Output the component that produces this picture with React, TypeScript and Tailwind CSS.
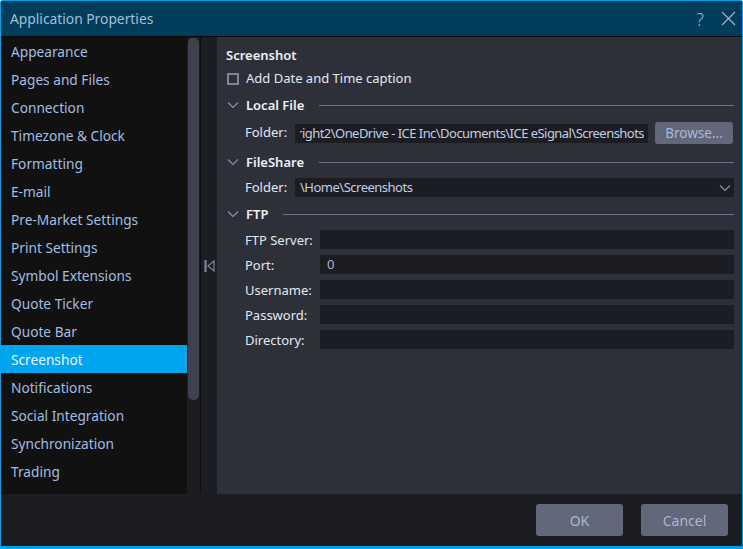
import React from "react";

const items = ["Appearance","Pages and Files","Connection","Timezone & Clock","Formatting","E-mail","Pre-Market Settings","Print Settings","Symbol Extensions","Quote Ticker","Quote Bar","Screenshot","Notifications","Social Integration","Synchronization","Trading"];

function Chevron() {
  return (
    <svg width="12" height="8" viewBox="0 0 12 8" className="shrink-0" fill="none" stroke="#8d92a6" strokeWidth="1.1">
      <path d="M1 1.5 L6 6.5 L11 1.5" />
    </svg>
  );
}

function Section({ title }: { title: string }) {
  return (
    <div className="flex items-center h-5">
      <div className="w-[20px] pl-[1px] flex items-center"><Chevron /></div>
      <span className="font-semibold text-[13px] text-[#eef0f6] pt-[2px]">{title}</span>
      <div className="flex-1 h-px bg-[#6d7080] ml-[15px]" />
    </div>
  );
}

function Field({ label, value }: { label: string; value?: string }) {
  return (
    <div className="flex items-center h-[19px] mb-[6px]">
      <span className="w-[75px] shrink-0 text-[13px] text-[#e4e8f2] pt-[2px]">{label}</span>
      <div className="flex-1 h-[19px] bg-[#1c1d22] pl-[7px] text-[13px] leading-[19px] text-[#a9b6d2]">{value}</div>
    </div>
  );
}

export default function App() {
  return (
    <div className="w-[743px] h-[549px] overflow-hidden flex flex-col border-t border-l border-r border-b-[3px] border-[#00a2ed] rounded-t-[3px] bg-[#1c1d22]" style={{ fontFamily: '"Noto Sans", sans-serif' }}>
      <div className="h-[36px] shrink-0 bg-[#003d5b] flex items-center pl-[9px] border-b border-[#0b0b0d]">
        <span className="text-[13.8px] text-[#a7bdd8] flex-1 pt-[2px]">Application Properties</span>
        <span className="text-[18px] text-[#a7b4cc] font-light mr-[17px] leading-none">?</span>
        <svg width="15" height="15" viewBox="0 0 15 15" className="mr-[6px]" stroke="#a7b4cc" strokeWidth="1.1"><path d="M1 1 L14 14 M14 1 L1 14" /></svg>
      </div>
      <div className="h-[457px] shrink-0 flex">
        <div className="w-[186px] shrink-0 bg-[#111112]">
          {items.map((t) => (
            <div key={t} className={`h-[28px] pl-[10px] leading-[30px] text-[13.7px] ${t === "Screenshot" ? "bg-[#00a5f0] text-[#e6f4ff]" : "text-[#a3bde0]"}`}>{t}</div>
          ))}
        </div>
        <div className="w-[13px] shrink-0 pl-px pt-[1px]">
          <div className="w-[11px] h-[362px] rounded-[5px] bg-[#3e414e]" />
        </div>
        <div className="w-px shrink-0 bg-[#0e0e10]" />
        <div className="w-[16px] shrink-0 flex items-center justify-center">
          <svg width="11" height="12" viewBox="0 0 11 12" fill="none" stroke="#7f8498" strokeWidth="1.2"><path d="M1 0 V12 M2 0 V12 M10 1 L4 6 L10 11 Z" /></svg>
        </div>
        <div className="flex-1 min-w-0 bg-[#2e3039] pl-[9px] pr-[8px] pt-[10px] text-[13px]">
          <div className="font-semibold text-[#eef0f6] h-[17px] leading-[17px]">Screenshot</div>
          <div className="flex items-center h-[20px] mt-[5px]">
            <div className="w-[12px] h-[12px] border-2 border-[#7f8498] ml-[1px]" />
            <span className="ml-[7px] text-[#e4e8f2]">Add Date and Time caption</span>
          </div>
          <div className="mt-[6px]"><Section title="Local File" /></div>
          <div className="flex items-center h-[22px] mt-[7px] pl-[19px]">
            <span className="w-[50px] shrink-0 text-[#e4e8f2]">Folder:</span>
            <div className="w-[353px] h-[19px] bg-[#1c1d22] pl-[5px] pr-[4px] text-[#c3cee2] leading-[19px]">
              <div className="overflow-hidden flex justify-end tracking-[-0.54px]">
                <span className="whitespace-nowrap shrink-0">right2\OneDrive - ICE Inc\Documents\ICE eSignal\Screenshots</span>
              </div>
            </div>
            <div className="ml-[7px] w-[78px] h-[22px] rounded-[3px] bg-[#62677a] text-[#a8b8d6] text-[13.5px] text-center leading-[22px]">Browse...</div>
          </div>
          <div className="mt-[8px]"><Section title="FileShare" /></div>
          <div className="flex items-center h-[19px] mt-[6px] pl-[19px]">
            <span className="w-[50px] shrink-0 text-[#e4e8f2]">Folder:</span>
            <div className="flex-1 h-[19px] bg-[#1c1d22] flex items-center justify-between pl-[5px] pr-[3px] text-[#c3cee2]">
              <span className="tracking-[-0.5px]">\Home\Screenshots</span>
              <Chevron />
            </div>
          </div>
          <div className="mt-[7px]"><Section title="FTP" /></div>
          <div className="pl-[19px] mt-[6px]">
            <Field label="FTP Server:" />
            <Field label="Port:" value="0" />
            <Field label="Username:" />
            <Field label="Password:" />
            <Field label="Directory:" />
          </div>
        </div>
      </div>
      <div className="flex-1 flex justify-end items-center gap-[18px] pr-[14px] pb-[1px]">
        <div className="w-[87px] h-[32px] rounded-[3px] bg-[#62677a] text-[#a8b8d6] text-[14px] text-center leading-[33px]">OK</div>
        <div className="w-[87px] h-[32px] rounded-[3px] bg-[#62677a] text-[#a8b8d6] text-[14px] text-center leading-[33px]">Cancel</div>
      </div>
    </div>
  );
}
